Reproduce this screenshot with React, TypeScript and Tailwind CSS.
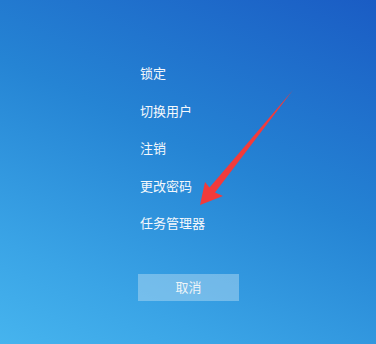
import React from "react";

const items = ["锁定", "切换用户", "注销", "更改密码", "任务管理器"];

export default function App() {
  return (
    <div
      className="relative w-[376px] h-[344px] overflow-hidden bg-[linear-gradient(205deg,#1a5cc4_0%,#2584d4_45%,#3aa4e6_80%,#46b4ee_100%)] text-white"
      style={{ fontFamily: '"Noto Sans CJK SC", "Noto Sans", sans-serif' }}
    >
      <div className="flex flex-col pl-[140px] pt-[54px]">
        {items.map((t) => (
          <div key={t} className="h-[37.5px] flex items-center text-[13px] leading-none text-[#f4f8fc]">
            {t}
          </div>
        ))}
        <div className="mt-[32px] ml-[-2px] w-[101px] h-[27px] flex items-center justify-center bg-[rgba(190,225,245,0.45)] text-[13px] text-[#eef4f8]">
          取消
        </div>
      </div>
      <svg className="absolute left-0 top-0" width="376" height="344" viewBox="0 0 376 344">
        <polygon
          points="200,205 205,182 209.5,187.5 293,90 215,192.5 223,196"
          fill="#f23b3b"
        />
      </svg>
    </div>
  );
}
